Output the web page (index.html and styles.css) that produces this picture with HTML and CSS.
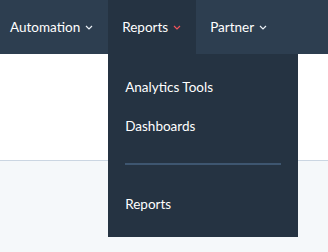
FILE: index.html
```html
<!DOCTYPE html>
<html>
  <head>
    <meta charset="UTF-8" />
    <title>Reports menu</title>
    <link rel="stylesheet" href="styles.css">
  </head>
  <body>
    <nav class="nav">
      <div class="nav-item first">
        <span>Automation</span>
        <svg class="caret" viewBox="0 0 8 5" width="8" height="5"><path d="M1 1l3 3 3-3" /></svg>
      </div>
      <div class="nav-item active">
        <span>Reports</span>
        <svg class="caret" viewBox="0 0 8 5" width="8" height="5"><path d="M1 1l3 3 3-3" /></svg>
        <ul class="dropdown">
          <li>Analytics Tools</li>
          <li>Dashboards</li>
          <li class="divider"></li>
          <li>Reports</li>
        </ul>
      </div>
      <div class="nav-item">
        <span>Partner</span>
        <svg class="caret" viewBox="0 0 8 5" width="8" height="5"><path d="M1 1l3 3 3-3" /></svg>
      </div>
    </nav>
    <div class="content-top"></div>
    <div class="content-bottom"></div>
  </body>
</html>
```

FILE: styles.css
```css
body {
  margin: 0;
  font-family: Lato, "Open Sans", sans-serif;
  font-size: 13.5px;
  background: #f5f8fa;
}

.nav {
  position: relative;
  z-index: 2;
  display: flex;
  height: 54px;
  background: #2d3e50;
  color: #fff;
}

.nav-item {
  position: relative;
  display: flex;
  align-items: center;
  gap: 5px;
  padding: 0 15px 0 14px;
}

.nav-item.first {
  padding-left: 10px;
}

.nav-item.active {
  background: #253342;
}

.caret {
  fill: none;
  stroke: #eaf0f6;
  stroke-width: 1.2;
}

.active .caret {
  stroke: #f2545b;
}

.dropdown {
  position: absolute;
  top: 54px;
  left: 0;
  width: 190px;
  margin: 0;
  padding: 14px 0 13px;
  list-style: none;
  background: #253342;
}

.dropdown li {
  height: 39px;
  line-height: 39px;
  padding-left: 17px;
}

.dropdown .divider {
  height: 2px;
  margin: 17px 17px 20px;
  padding: 0;
  background: #3e5670;
}

.content-top {
  height: 106px;
  background: #fff;
  border-bottom: 1px solid #cbd6e2;
}

.content-bottom {
  height: 91px;
}
```
